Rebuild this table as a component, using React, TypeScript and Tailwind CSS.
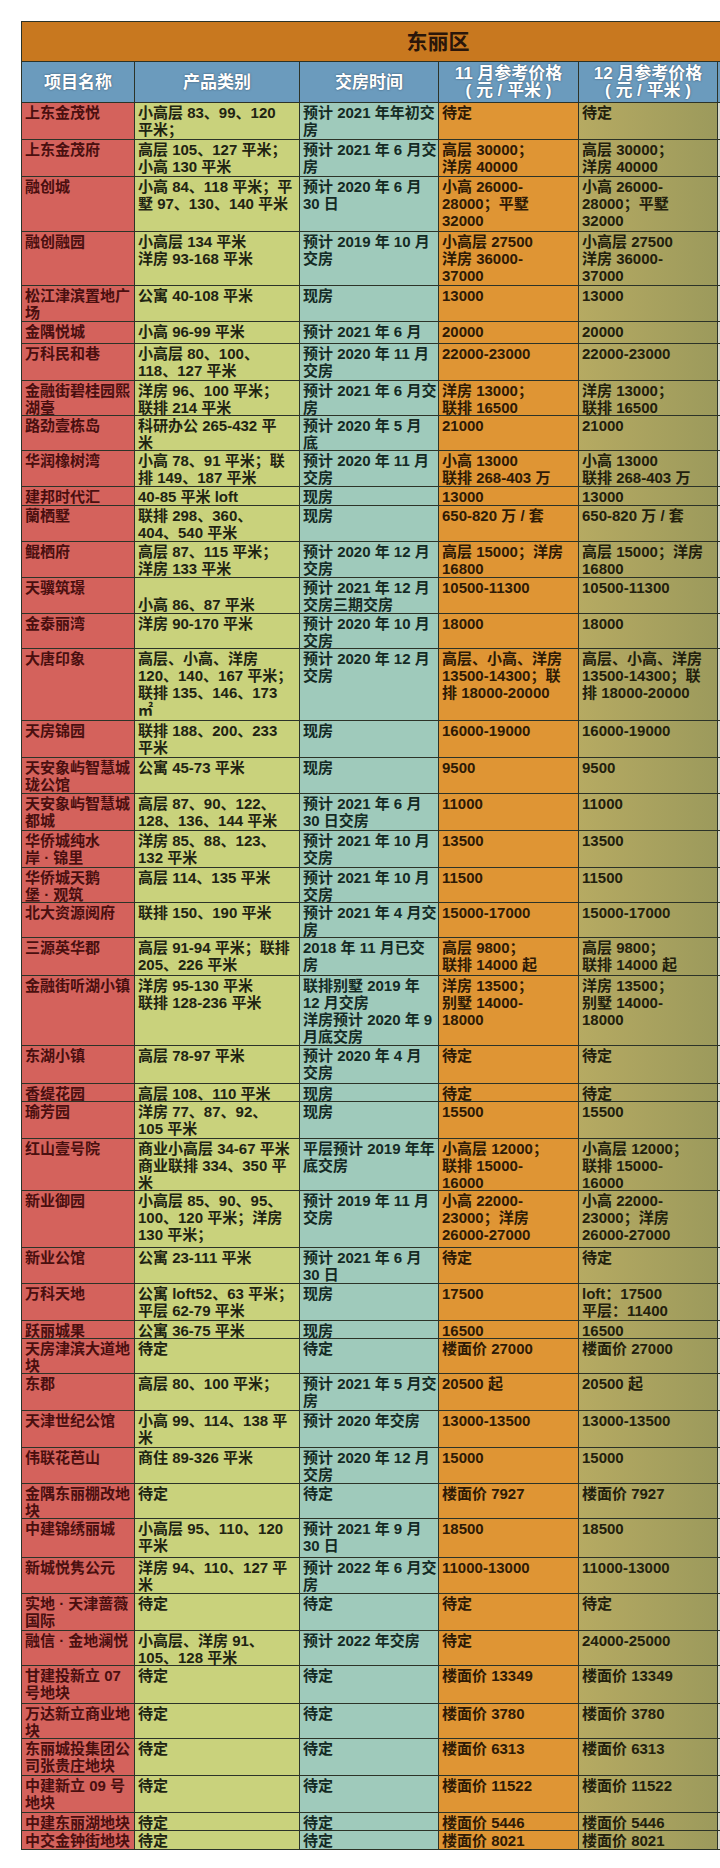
import React from 'react';

type Row = [string, string, string, string, string | null, number];

// name | product | delivery | Nov price | Dec price (null = same as Nov) | row height
const rows: Row[] = [
  ['上东金茂悦', '小高层 83、99、120\n平米；', '预计 2021 年年初交\n房', '待定', null, 37],
  ['上东金茂府', '高层 105、127 平米；\n小高 130 平米', '预计 2021 年 6 月交\n房', '高层 30000；\n洋房 40000', null, 37],
  ['融创城', '小高 84、118 平米；平\n墅 97、130、140 平米', '预计 2020 年 6 月\n30 日', '小高 26000-\n28000；平墅\n32000', null, 55],
  ['融创融园', '小高层 134 平米\n洋房 93-168 平米', '预计 2019 年 10 月\n交房', '小高层 27500\n洋房 36000-\n37000', null, 54],
  ['松江津滨置地广\n场', '公寓 40-108 平米', '现房', '13000', null, 36],
  ['金隅悦城', '小高 96-99 平米', '预计 2021 年 6 月', '20000', null, 22],
  ['万科民和巷', '小高层 80、100、\n118、127 平米', '预计 2020 年 11 月\n交房', '22000-23000', null, 37],
  ['金融街碧桂园熙\n湖臺', '洋房 96、100 平米；\n联排 214 平米', '预计 2021 年 6 月交\n房', '洋房 13000；\n联排 16500', null, 35],
  ['路劲壹栋岛', '科研办公 265-432 平\n米', '预计 2020 年 5 月\n底', '21000', null, 35],
  ['华润橡树湾', '小高 78、91 平米；联\n排 149、187 平米', '预计 2020 年 11 月\n交房', '小高 13000\n联排 268-403 万', null, 36],
  ['建邦时代汇', '40-85 平米 loft', '现房', '13000', null, 19],
  ['蘭栖墅', '联排 298、360、\n404、540 平米', '现房', '650-820 万 / 套', null, 36],
  ['鲲栖府', '高层 87、115 平米；\n洋房 133 平米', '预计 2020 年 12 月\n交房', '高层 15000；洋房\n16800', null, 36],
  ['天骥筑璟', '\n小高 86、87 平米', '预计 2021 年 12 月\n交房三期交房', '10500-11300', null, 36],
  ['金泰丽湾', '洋房 90-170 平米', '预计 2020 年 10 月\n交房', '18000', null, 35],
  ['大唐印象', '高层、小高、洋房\n120、140、167 平米；\n联排 135、146、173\n㎡', '预计 2020 年 12 月\n交房', '高层、小高、洋房\n13500-14300；联\n排 18000-20000', null, 72],
  ['天房锦园', '联排 188、200、233\n平米', '现房', '16000-19000', null, 37],
  ['天安象屿智慧城\n珑公馆', '公寓 45-73 平米', '现房', '9500', null, 36],
  ['天安象屿智慧城\n都城', '高层 87、90、122、\n128、136、144 平米', '预计 2021 年 6 月\n30 日交房', '11000', null, 37],
  ['华侨城纯水\n岸 · 锦里', '洋房 85、88、123、\n132 平米', '预计 2021 年 10 月\n交房', '13500', null, 37],
  ['华侨城天鹅\n堡 · 观筑', '高层 114、135 平米', '预计 2021 年 10 月\n交房', '11500', null, 35],
  ['北大资源阅府', '联排 150、190 平米', '预计 2021 年 4 月交\n房', '15000-17000', null, 35],
  ['三源英华郡', '高层 91-94 平米；联排\n205、226 平米', '2018 年 11 月已交\n房', '高层 9800；\n联排 14000 起', null, 38],
  ['金融街听湖小镇', '洋房 95-130 平米\n联排 128-236 平米', '联排别墅 2019 年\n12 月交房\n洋房预计 2020 年 9\n月底交房', '洋房 13500；\n别墅 14000-\n18000', null, 70],
  ['东湖小镇', '高层 78-97 平米', '预计 2020 年 4 月\n交房', '待定', null, 38],
  ['香缇花园', '高层 108、110 平米', '现房', '待定', null, 18],
  ['瑜芳园', '洋房 77、87、92、\n105 平米', '现房', '15500', null, 37],
  ['红山壹号院', '商业小高层 34-67 平米\n商业联排 334、350 平\n米', '平层预计 2019 年年\n底交房', '小高层 12000；\n联排 15000-\n16000', null, 52],
  ['新业御园', '小高层 85、90、95、\n100、120 平米；洋房\n130 平米；', '预计 2019 年 11 月\n交房', '小高 22000-\n23000；洋房\n26000-27000', null, 57],
  ['新业公馆', '公寓 23-111 平米', '预计 2021 年 6 月\n30 日', '待定', null, 36],
  ['万科天地', '公寓 loft52、63 平米；\n平层 62-79 平米', '现房', '17500', 'loft：17500\n平层：11400', 37],
  ['跃丽城果', '公寓 36-75 平米', '现房', '16500', null, 18],
  ['天房津滨大道地\n块', '待定', '待定', '楼面价 27000', null, 35],
  ['东郡', '高层 80、100 平米；', '预计 2021 年 5 月交\n房', '20500 起', null, 37],
  ['天津世纪公馆', '小高 99、114、138 平\n米', '预计 2020 年交房', '13000-13500', null, 37],
  ['伟联花芭山', '商住 89-326 平米', '预计 2020 年 12 月\n交房', '15000', null, 36],
  ['金隅东丽棚改地\n块', '待定', '待定', '楼面价 7927', null, 35],
  ['中建锦绣丽城', '小高层 95、110、120\n平米', '预计 2021 年 9 月\n30 日', '18500', null, 39],
  ['新城悦隽公元', '洋房 94、110、127 平\n米', '预计 2022 年 6 月交\n房', '11000-13000', null, 36],
  ['实地 · 天津蔷薇\n国际', '待定', '待定', '待定', null, 37],
  ['融信 · 金地澜悦', '小高层、洋房 91、\n105、128 平米', '预计 2022 年交房', '待定', '24000-25000', 35],
  ['甘建投新立 07\n号地块', '待定', '待定', '楼面价 13349', null, 38],
  ['万达新立商业地\n块', '待定', '待定', '楼面价 3780', null, 35],
  ['东丽城投集团公\n司张贵庄地块', '待定', '待定', '楼面价 6313', null, 37],
  ['中建新立 09 号\n地块', '待定', '待定', '楼面价 11522', null, 37],
  ['中建东丽湖地块', '待定', '待定', '楼面价 5446', null, 18],
  ['中交金钟街地块', '待定', '待定', '楼面价 8021', null, 19],
];

const font = { fontFamily: '"Liberation Sans", "Noto Sans CJK SC", sans-serif' };

const cellCls =
  'border-r border-b border-[#2c3328] pl-[3px] pt-[1px] text-[15px] leading-[17px] font-bold whitespace-pre overflow-hidden';
const headCls = 'border-r border-b border-[#2c3328] flex flex-col items-center justify-center';

export default function App() {
  return (
    <div className="w-[720px] h-[1868px] bg-white overflow-hidden pt-[21px] pl-[21px]" style={font}>
      <div className="w-[834px] border-l border-t border-[#2c3328]">
        {/* Title */}
        <div className="h-[40px] bg-[#c8781f] border-r border-b border-[#2c3328] flex items-center justify-center">
          <span className="text-[21px] font-bold text-[#2a160a]">东丽区</span>
        </div>

        {/* Header */}
        <div className="grid grid-cols-[113px_165px_139px_140px_139px_138px] h-[41px] bg-[#6b9bbd] text-white font-bold text-[17px] leading-[17px] [text-shadow:0_0_2px_rgba(40,60,80,0.8)]">
          <div className={headCls}>项目名称</div>
          <div className={headCls}>产品类别</div>
          <div className={headCls}>交房时间</div>
          <div className={headCls}>
            <span>11 月参考价格</span>
            <span>( 元 / 平米 )</span>
          </div>
          <div className={headCls}>
            <span>12 月参考价格</span>
            <span>( 元 / 平米 )</span>
          </div>
          <div className={headCls}></div>
        </div>

        {/* Rows */}
        {rows.map(([name, product, delivery, nov, dec, h], i) => (
          <div
            key={i}
            className="grid grid-cols-[113px_165px_139px_140px_139px_138px]"
            style={{ height: h }}
          >
            <div className={`${cellCls} bg-[#d4625c] text-[#4a0f0f]`}>{name}</div>
            <div className={`${cellCls} bg-[#c9d27c] text-[#1f2412]`}>{product}</div>
            <div className={`${cellCls} bg-[#9fcabb] text-[#142a24]`}>{delivery}</div>
            <div className={`${cellCls} bg-[#df9534] text-[#2e1a05]`}>{nov}</div>
            <div className={`${cellCls} bg-gradient-to-r from-[#b6aa62] to-[#9c9a5c] text-[#22200c]`}>
              {dec ?? nov}
            </div>
            <div className={`${cellCls} bg-[#d8d8cc]`}></div>
          </div>
        ))}
      </div>
    </div>
  );
}
